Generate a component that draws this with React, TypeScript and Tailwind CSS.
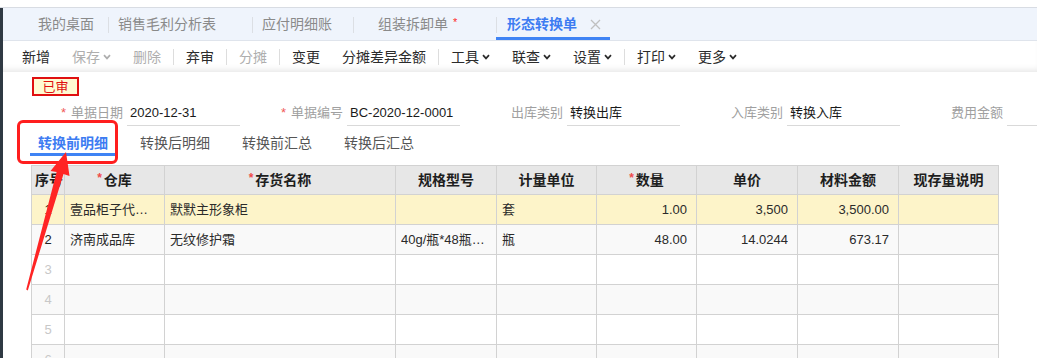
import React from "react";

const Chev = () => (
  <svg width="8" height="6" viewBox="0 0 8 6" className="ml-[3px] mt-[1px]">
    <path d="M1 1.2 L4 4.4 L7 1.2" fill="none" stroke="currentColor" strokeWidth="1.7" />
  </svg>
);

type TB = { t?: string; dis?: boolean; chev?: boolean; sep?: boolean };
const toolbar: TB[] = [
  { t: "新增" },
  { t: "保存", dis: true, chev: true },
  { t: "删除", dis: true },
  { sep: true },
  { t: "弃审" },
  { sep: true },
  { t: "分摊", dis: true },
  { sep: true },
  { t: "变更" },
  { t: "分摊差异金额" },
  { sep: true },
  { t: "工具", chev: true },
  { t: "联查", chev: true },
  { t: "设置", chev: true },
  { sep: true },
  { t: "打印", chev: true },
  { t: "更多", chev: true },
];

const cols = [33, 100, 231, 101, 100, 100, 101, 101, 100];

const Star = () => <span className="text-[#f04b4b] text-[12px] mr-[2px] relative top-[-2px]">*</span>;

const headers: { t: string; star?: boolean }[] = [
  { t: "序号" },
  { t: "仓库", star: true },
  { t: "存货名称", star: true },
  { t: "规格型号" },
  { t: "计量单位" },
  { t: "数量", star: true },
  { t: "单价" },
  { t: "材料金额" },
  { t: "现存量说明" },
];

type Row = { n: string; cells: string[]; bg: string; nGray?: boolean };
const rows: Row[] = [
  { n: "1", cells: ["壹品柜子代售仓库", "默默主形象柜", "", "套", "1.00", "3,500", "3,500.00", ""], bg: "bg-[#fdf4c9]" },
  { n: "2", cells: ["济南成品库", "无纹修护霜", "40g/瓶*48瓶/箱", "瓶", "48.00", "14.0244", "673.17", ""], bg: "bg-[#f9f9f9]" },
  { n: "3", cells: ["", "", "", "", "", "", "", ""], bg: "bg-white", nGray: true },
  { n: "4", cells: ["", "", "", "", "", "", "", ""], bg: "bg-[#f9f9f9]", nGray: true },
  { n: "5", cells: ["", "", "", "", "", "", "", ""], bg: "bg-white", nGray: true },
  { n: "6", cells: ["", "", "", "", "", "", "", ""], bg: "bg-[#f9f9f9]", nGray: true },
];

const Field = ({ label, value, star }: { label: string; value: string; star?: boolean }) => (
  <div className="flex w-[220px] shrink-0 items-center h-[26px]">
    <div className="w-[103px] text-right text-[13px] leading-[18px] text-[#a0a0a0] whitespace-nowrap">
      {star && <span className="text-[#f05a5a] mr-[5px]">*</span>}
      {label}
    </div>
    <div className="ml-[4px] w-[113px] h-[26px] border-b border-[#d9d9d9] flex items-center pl-[3px] text-[13px] leading-[18px] text-[#1a1a1a] whitespace-nowrap">
      {value}
    </div>
  </div>
);

export default function App() {
  return (
    <div className="relative w-[1037px] h-[358px] overflow-hidden bg-white font-['Liberation_Sans','Noto_Sans_CJK_SC',sans-serif]">
      <div className="h-[8px] border-b border-[#d8dce3] bg-white" />
      <div className="flex h-[350px]">
        <div className="w-[3px] shrink-0 bg-[#2f3943]" />
        <div className="flex-1 min-w-0 flex flex-col">
          {/* top tabs */}
          <div className="h-[33px] shrink-0 bg-[#eff4fc] border-b border-[#dfe4ec] flex pl-[25px] text-[14px] leading-[20px]">
            <div className="w-[80px] h-full pl-[10px] pt-[6px] text-[#8a8a8a]">我的桌面</div>
            <div className="relative w-[144px] h-full pl-[10px] pt-[6px] text-[#8a8a8a]">
              <span className="absolute left-0 top-[9px] w-px h-[16px] bg-[#dcdfe4]" />
              销售毛利分析表
            </div>
            <div className="relative w-[101px] h-full pl-[10px] pt-[6px] text-[#8a8a8a]">
              <span className="absolute left-0 top-[9px] w-px h-[16px] bg-[#dcdfe4]" />
              应付明细账
            </div>
            <div className="relative w-[143px] h-full pl-[25px] pt-[6px] text-[#8a8a8a] whitespace-nowrap">
              <span className="absolute left-0 top-[9px] w-px h-[16px] bg-[#dcdfe4]" />
              组装拆卸单<span className="text-[#ff2a2a] text-[11px] ml-[5px] relative top-[-3px]">*</span>
            </div>
            <div className="relative w-[114px] h-full pl-[11px] pt-[6px] border-b-[3px] border-[#3f83f4] flex items-start">
              <span className="absolute left-0 top-[9px] w-px h-[16px] bg-[#dcdfe4]" />
              <span className="text-[#3d7cf2] font-bold">形态转换单</span>
              <svg width="11" height="11" viewBox="0 0 11 11" className="ml-[13px] mt-[5px]">
                <path d="M1 1 L10 10 M10 1 L1 10" stroke="#c0c0c0" strokeWidth="1.3" />
              </svg>
            </div>
          </div>
          {/* toolbar */}
          <div className="h-[31px] shrink-0 flex items-center pl-[8px] text-[14px] leading-[20px] shadow-[inset_0_-6px_6px_-4px_rgba(0,0,0,0.10)]">
            {toolbar.map((b, i) =>
              b.sep ? (
                <span key={i} className="mx-[1px] w-px h-[16px] bg-[#dddddd]" />
              ) : (
                <div
                  key={i}
                  className={`flex items-center whitespace-nowrap ${b.chev ? "pl-[11px] pr-[11px]" : "px-[11px]"} ${
                    b.dis ? "text-[#aeaeae]" : "text-[#2b2b2b]"
                  }`}
                >
                  {b.t}
                  {b.chev && <Chev />}
                </div>
              )
            )}
          </div>
          {/* content */}
          <div className="flex-1 flex flex-col">
            <div className="ml-[29px] mt-[5px] w-[47px] h-[19px] border-2 border-[#e01010] bg-[#fffbd3] flex items-center justify-center text-[13px] leading-[15px] text-[#e01010]">
              已审
            </div>
            <div className="flex ml-[17px] mt-[4px]">
              <Field label="单据日期" value="2020-12-31" star />
              <Field label="单据编号" value="BC-2020-12-0001" star />
              <Field label="出库类别" value="转换出库" />
              <Field label="入库类别" value="转换入库" />
              <Field label="费用金额" value="" />
            </div>
            <div className="flex ml-[27px] mt-[1px] gap-[14px] text-[14px] leading-[20px]">
              <div className="h-[29px] pt-[6px] pl-[8px] pr-[10px] border-b-[3px] border-[#3f83f4] text-[#3d7cf2] font-bold whitespace-nowrap">
                转换前明细
              </div>
              {["转换后明细", "转换前汇总", "转换后汇总"].map((t) => (
                <div key={t} className="h-[29px] pt-[6px] pl-[8px] pr-[10px] text-[#555555] whitespace-nowrap">
                  {t}
                </div>
              ))}
            </div>
            {/* table */}
            <div className="ml-[28px] mt-[9px] w-[968px] border-t border-l border-[#d2d2d2]">
              <div className="flex h-[29px] bg-[#e7e7e7] border-b border-[#d2d2d2]">
                {headers.map((h, i) => (
                  <div
                    key={h.t}
                    style={{ width: cols[i] }}
                    className={`shrink-0 h-full border-r border-[#d2d2d2] flex items-center overflow-hidden whitespace-nowrap text-[14px] leading-[20px] font-bold text-[#1e1e1e] ${
                      i === 0 ? "pl-[3px]" : "justify-center"
                    }`}
                  >
                    {h.star && <Star />}
                    {h.t}
                  </div>
                ))}
              </div>
              {rows.map((r) => (
                <div key={r.n} className={`flex h-[30px] border-b border-[#d2d2d2] ${r.bg}`}>
                  <div
                    style={{ width: cols[0] }}
                    className={`shrink-0 h-full border-r border-[#d2d2d2] flex items-center justify-center text-[13px] ${
                      r.nGray ? "text-[#c8c8c8]" : "text-[#222]"
                    }`}
                  >
                    {r.n}
                  </div>
                  {r.cells.map((c, j) => {
                    const num = j >= 4 && j <= 6;
                    return (
                      <div
                        key={j}
                        style={{ width: cols[j + 1] }}
                        className={`shrink-0 h-full border-r border-[#d2d2d2] flex items-center text-[13px] leading-[18px] text-[#2a2a2a] overflow-hidden ${
                          num ? "justify-end pr-[9px]" : "pl-[5px] pr-[9px]"
                        }`}
                      >
                        <span className="block truncate min-w-0">{c}</span>
                      </div>
                    );
                  })}
                </div>
              ))}
            </div>
          </div>
        </div>
      </div>
      {/* annotations */}
      <div className="absolute left-[17px] top-[120px] w-[101px] h-[44px] border-[3px] border-[#ff1e1e] rounded-[6px] pointer-events-none" />
      <svg className="absolute left-0 top-0 pointer-events-none" width="1037" height="358" viewBox="0 0 1037 358">
        <polygon
          points="66,152 69.5,176 63.5,174 27.8,290.5 26.2,289.5 56.6,172 50.5,171"
          fill="#ff2424"
        />
      </svg>
    </div>
  );
}
